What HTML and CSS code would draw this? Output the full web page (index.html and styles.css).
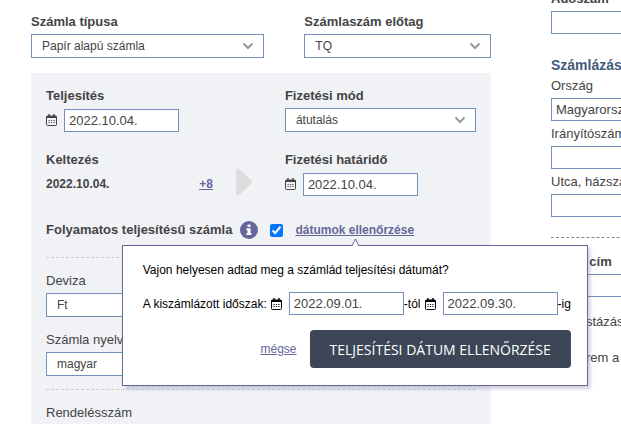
FILE: index.html
```html
<!DOCTYPE html>
<html lang="hu">
<head>
    <meta charset="UTF-8">
    <meta name="viewport" content="width=device-width, initial-scale=1.0">
    <title>Új számla</title>
    <link rel="stylesheet" href="styles.css">
</head>
<body>
    <svg class="sprite" aria-hidden="true">
        <symbol id="calendar" viewBox="0 0 11 12">
            <path d="M3 0v3M8 0v3" stroke="currentColor" stroke-width="1.4"/>
            <rect x=".5" y="2" width="10" height="9.500" rx="1" fill="none" stroke="currentColor"/>
            <path d="M.5 2h10v2h-10z" fill="currentColor"/>
            <path d="M2.500 6.500h1.300M4.900 6.500h1.300M7.300 6.500h1.300M2.500 8.500h1.300M4.900 8.500h1.300M7.300 8.500h1.300" stroke="currentColor" stroke-width=".9"/>
        </symbol>
    </svg>

    <div class="page">
        <form class="invoice">
            <div class="invoice-head">
                <div class="field">
                    <label class="bold" for="type">Számla típusa</label>
                    <select id="type"><option>Papír alapú számla</option></select>
                </div>
                <div class="field">
                    <label class="bold" for="prefix">Számlaszám előtag</label>
                    <select id="prefix"><option>TQ</option></select>
                </div>
            </div>

            <div class="panel">
                <div class="row">
                    <div class="field">
                        <label class="bold" for="fulfilled">Teljesítés</label>
                        <div class="date">
                            <svg class="calendar"><use href="#calendar"/></svg>
                            <input type="text" id="fulfilled" value="2022.10.04.">
                        </div>
                    </div>
                    <div class="field">
                        <label class="bold" for="payment">Fizetési mód</label>
                        <select id="payment"><option>átutalás</option></select>
                    </div>
                </div>

                <div class="row">
                    <div class="issued">
                        <div class="field">
                            <span class="label bold">Keltezés</span>
                            <div class="issued-value">
                                <strong>2022.10.04.</strong>
                                <a href="#">+8</a>
                            </div>
                        </div>
                        <svg class="arrow" viewBox="0 0 17 28"><path d="M0 2Q0-1 3 1L15 12Q17 14 15 16L3 27Q0 29 0 26z" fill="#ddd"/></svg>
                    </div>
                    <div class="field">
                        <label class="bold" for="deadline">Fizetési határidő</label>
                        <div class="date">
                            <svg class="calendar"><use href="#calendar"/></svg>
                            <input type="text" id="deadline" value="2022.10.04.">
                        </div>
                    </div>
                </div>

                <div class="continuous">
                    <label class="bold" for="continuous">Folyamatos teljesítésű számla</label>
                    <svg class="info" viewBox="0 0 18 18">
                        <circle cx="9" cy="9" r="9" fill="#666699"/>
                        <path d="M7.500 3.500h3v2.500h-3zM6.500 7.200h4v4.800h1v2h-5v-2h1V9.200h-1z" fill="#fff"/>
                    </svg>
                    <input type="checkbox" id="continuous" checked>
                    <div class="check">
                        <a class="check-link" href="#">dátumok ellenőrzése</a>
                        <div class="popup">
                            <svg class="popup-tip" viewBox="0 0 9 8"><path d="M1 8L4.500 1L8 8" fill="#fff" stroke="#666699"/></svg>
                            <p>Vajon helyesen adtad meg a számlád teljesítési dátumát?</p>
                            <div class="period">
                                <label for="from">A kiszámlázott időszak:</label>
                                <svg class="calendar"><use href="#calendar"/></svg>
                                <input type="text" id="from" value="2022.09.01.">
                                <label for="to">-tól</label>
                                <svg class="calendar"><use href="#calendar"/></svg>
                                <input type="text" id="to" value="2022.09.30.">
                                <span>-ig</span>
                            </div>
                            <div class="actions">
                                <a href="#">mégse</a>
                                <button type="button">TELJESÍTÉSI DÁTUM ELLENŐRZÉSE</button>
                            </div>
                        </div>
                    </div>
                </div>

                <div class="section">
                    <div class="field">
                        <label for="currency">Deviza</label>
                        <select id="currency"><option>Ft</option></select>
                    </div>
                    <div class="field">
                        <label for="language">Számla nyelve</label>
                        <select id="language"><option>magyar</option></select>
                    </div>
                </div>
                <div class="section">
                    <span class="label">Rendelésszám</span>
                </div>
            </div>
        </form>

        <form class="partner">
            <label class="bold" for="tax">Adószám</label>
            <input type="text" id="tax">
            <h2>Számlázási cím</h2>
            <label for="country">Ország</label>
            <input type="text" id="country" value="Magyarország">
            <label for="zip">Irányítószám</label>
            <input type="text" id="zip">
            <label for="street">Utca, házszám</label>
            <input type="text" id="street">
            <div class="partner-mail">
                <label class="bold" for="email">Email cím</label>
                <input type="text" id="email">
            </div>
            <label class="option"><input type="checkbox">Postázási cím</label>
            <label class="option"><input type="checkbox">Kérem a számlát</label>
        </form>
    </div>
</body>
</html>
```

FILE: styles.css
```css
* {
    box-sizing: border-box;
}
body {
    margin: 0;
    font-family: "Liberation Sans", Arial, sans-serif;
    font-size: 13px;
    line-height: 16px;
    color: #444;
    background: #fff;
}
.sprite {
    display: none;
}
.page {
    display: flex;
    gap: 60px;
    min-height: 100vh;
    padding-left: 31px;
}
a {
    color: #666699;
    font-size: 12px;
}
label,
.label {
    display: block;
    white-space: nowrap;
}
.bold {
    font-weight: bold;
}
input[type="text"],
select {
    display: block;
    border: 1px solid #7390b8;
    border-radius: 0;
    background-color: #fff;
    color: #444;
    font-family: inherit;
}
input[type="text"] {
    width: 115px;
    height: 23px;
    padding: 0 4px;
    font-size: 13px;
}
select {
    width: 100%;
    height: 24px;
    padding: 0 30px 0 10px;
    font-size: 12px;
    appearance: none;
    background-image: url("data:image/svg+xml,%3Csvg xmlns='http://www.w3.org/2000/svg' width='12' height='8'%3E%3Cpath d='M1.500 1.500L6 6L10.500 1.500' fill='none' stroke='%23999' stroke-width='2'/%3E%3C/svg%3E");
    background-repeat: no-repeat;
    background-position: right 9px center;
}
input[type="checkbox"] {
    width: 13px;
    height: 13px;
    margin: 0;
    accent-color: #0075ff;
}
.calendar {
    flex: none;
    width: 11px;
    height: 12px;
}

/* invoice */
.invoice {
    flex: 1;
    display: flex;
    flex-direction: column;
    gap: 15px;
    padding-top: 14px;
}
.invoice-head {
    display: grid;
    grid-template-columns: 5fr 4fr;
    gap: 40px;
}
.field {
    display: flex;
    flex-direction: column;
    gap: 4px;
}
.panel {
    flex: 1;
    padding: 15px 15px 0;
    background: #f1f2f6;
}
.row {
    display: grid;
    grid-template-columns: 5fr 4fr;
    margin-bottom: 20px;
}
.date {
    display: flex;
    align-items: center;
    gap: 7px;
    height: 24px;
}
.issued {
    display: flex;
    align-items: flex-end;
    justify-content: space-between;
    padding-right: 32px;
}
.issued .field {
    flex: 1;
    margin-right: 23px;
}
.issued-value {
    display: flex;
    align-items: center;
    justify-content: space-between;
    height: 24px;
    font-size: 12px;
}
.issued-value a {
    font-weight: bold;
}
.arrow {
    width: 17px;
    height: 28px;
}
.continuous {
    display: flex;
    align-items: center;
    height: 28px;
    margin-bottom: 13px;
}
.info {
    width: 18px;
    height: 18px;
    margin: 0 12px 0 8px;
}
.check {
    position: relative;
    margin-left: 12px;
}
.check-link {
    font-weight: bold;
    white-space: nowrap;
}
.section {
    display: flex;
    flex-direction: column;
    gap: 15px;
    padding: 15px 0 13px;
    border-top: 1px dashed #ccc;
}

/* period check popup */
.popup {
    position: absolute;
    top: 23px;
    left: 50%;
    z-index: 1;
    width: max-content;
    padding: 16px 16px 17px 20px;
    border: 1px solid #666699;
    background: #fff;
    box-shadow: 3px 3px 3px rgba(102, 102, 153, 0.3);
    color: #000;
    font-size: 12px;
    transform: translateX(-50%);
}
.popup-tip {
    position: absolute;
    top: -8px;
    left: 50%;
    width: 9px;
    height: 8px;
    margin-left: -4px;
}
.popup p {
    margin: 0 0 14px;
}
.period {
    display: flex;
    align-items: center;
}
.period .calendar {
    margin: 0 7px 0 4px;
}
.actions {
    display: flex;
    align-items: center;
    justify-content: flex-end;
    gap: 13px;
    margin-top: 15px;
}
.actions button {
    height: 38px;
    padding: 0 20px;
    border: none;
    border-radius: 4px;
    background: #3c4656;
    color: #fff;
    font-family: "Open Sans", sans-serif;
    font-size: 14px;
    cursor: pointer;
}

/* partner */
.partner {
    flex: 0 0 70px;
    overflow: hidden;
    margin-top: -9px;
}
.partner label {
    margin-bottom: 4px;
}
.partner input[type="text"] {
    width: 200px;
    margin-bottom: 5px;
}
.partner h2 {
    margin: 23px 0 4px;
    color: #3f5a7a;
    font-size: 14px;
    line-height: 17px;
    white-space: nowrap;
}
.partner-mail {
    width: 200px;
    margin: 20px 0 17px;
    padding-top: 16px;
    border-top: 1px dashed #888;
}
.partner .option {
    display: flex;
    align-items: center;
    gap: 6px;
    margin-bottom: 20px;
}
.option input {
    flex: none;
}
```
